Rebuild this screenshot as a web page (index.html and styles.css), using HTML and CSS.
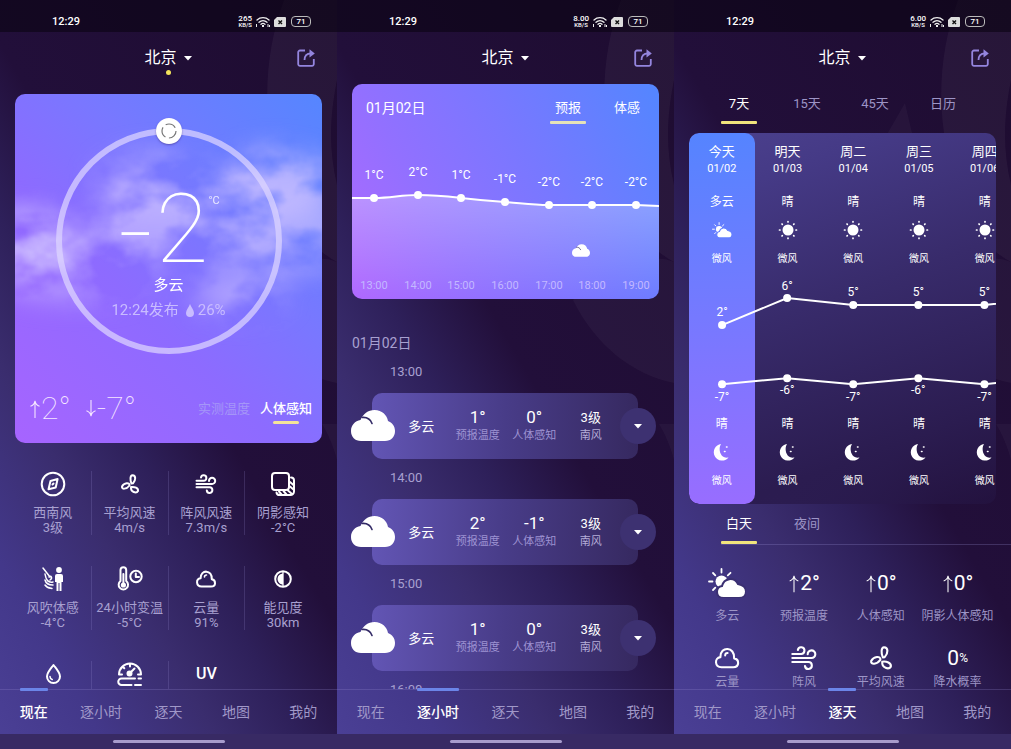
FILE: index.html
```html
<!DOCTYPE html>
<html lang="zh-CN">
<head>
<meta charset="utf-8">
<meta name="viewport" content="width=device-width, initial-scale=1">
<title>天气</title>
<link rel="stylesheet" href="styles.css">
</head>
<body>
<svg class="defs" aria-hidden="true">
  <defs>
    <symbol id="deco" viewBox="0 0 337 749">
      <path fill="#fff" opacity=".045" fill-rule="evenodd" d="M284 0C262 60 260 130 288 200C304 240 322 254 337 262V0ZM337 80C329 120 329 150 337 185Z"/>
      <path fill="#fff" opacity=".035" d="M236 300C258 345 296 375 337 383V262C310 250 270 270 236 300Z"/>
      <path fill="#fff" opacity=".03" d="M322 424H337V460C333 445 328 434 322 424ZM204 150L231 103L242 150Z"/>
    </symbol>
    <symbol id="i-wifi" viewBox="0 0 14 11"><g fill="none" stroke="#eee" stroke-width="1.3" stroke-linecap="round"><path d="M1 4A9 9 0 0 1 13 4M3 6.300A6 6 0 0 1 11 6.300M5 8.300A3 3 0 0 1 9 8.300"/></g><path fill="#eee" d="M6 9h2v2H6zM0 8h1v3H0zM11.500 8h1v3h-1zM13 9h1v2h-1z"/></symbol>
    <symbol id="i-sim" viewBox="0 0 12 10"><path fill="#ddd" d="M3 0h8a1 1 0 0 1 1 1v8a1 1 0 0 1-1 1H1a1 1 0 0 1-1-1V3z"/><path d="M4.500 3.500l3.500 3.500M8 3.500L4.500 7" stroke="#111" stroke-width="1.400"/></symbol>
    <symbol id="i-share" viewBox="0 0 18 18"><g fill="none" stroke="#9485de" stroke-width="1.800"><path d="M8 1.500H3A1.800 1.800 0 0 0 1.200 3.300V15A1.800 1.800 0 0 0 3 16.800H15A1.800 1.800 0 0 0 16.800 15V10"/><path d="M7.500 11C7.500 7 9.500 4.500 14 4.300"/></g><path fill="#9485de" d="M12.500 .300L17.800 4.400L12.500 8.500z"/></symbol>
    <symbol id="i-compass" viewBox="0 0 26 26"><circle cx="13" cy="13" r="11.300"/><path d="M17.600 8L15.700 16.500L8.500 18.300L10.500 10z"/><path d="M12.500 13.500l1-1"/></symbol>
    <symbol id="i-fan" viewBox="0 0 26 26"><path d="M14.500 12.500C13 9 13 4.500 15.500 4.300C19 4.500 19 9 16 12.300Z"/><path d="M12.500 14.500C13 11 7 11.500 5 15.500C4.500 18.500 9.500 18.500 12.500 14.500Z"/><path d="M14 16C17.500 15.500 21.500 17 21 20C19.500 22.500 13.500 21.500 14 16Z"/></symbol>
    <symbol id="i-wind" viewBox="0 0 26 26"><path d="M3.500 9.700H10.500A2.700 2.700 0 1 0 8 6.500M3.500 13H19A3.100 3.100 0 1 0 16 10M3.500 16.300H16.500A2.800 2.800 0 1 1 13.800 19.500"/></symbol>
    <symbol id="i-shadow" viewBox="0 0 26 26"><rect x="2" y="2" width="17" height="17" rx="3"/><path d="M21 6.500A3 3 0 0 1 24 9.500V20.500A3.500 3.500 0 0 1 20.500 24H9.500A3 3 0 0 1 6.500 21.500M9 20.500l2.500 3M13.500 20l3 3.500M18 19.500l4 3.500M20 15.500l3.500 3M20 11l3.500 3"/></symbol>
    <symbol id="i-person" viewBox="0 0 26 26"><g fill="currentColor" stroke="none"><circle cx="19" cy="4" r="2.900"/><path d="M17 8h4a2 2 0 0 1 2 2v6h-1.500v9h-2v-8h-1v8h-2v-9H15v-6a2 2 0 0 1 2-2z"/></g><path stroke-width="1.500" d="M3 2L10 11M5 8C6 14 8 17 13 16M9 11C11 9 13 12 10 14M5 14C6 18 9 19 13 19M5 19C7 22 9 22 12 22.500"/></symbol>
    <symbol id="i-thermo" viewBox="0 0 26 26"><path d="M3.500 15V4A2.800 2.800 0 0 1 9.200 4V15A4.700 4.700 0 1 1 3.500 15Z"/><path d="M6.400 8V18"/><circle cx="6.400" cy="19" r="1.600" fill="currentColor"/><circle cx="19" cy="10.500" r="5.700"/><path d="M18.800 7.500V11H22"/></symbol>
    <symbol id="i-cloud" viewBox="0 0 26 26"><path d="M8.500 20.500H18C23.500 20.500 23 14 18.800 13.300C19.500 3.500 7.500 3 7.600 12.300C2.500 13 3 20.500 8.500 20.500Z"/><path stroke-width="1.600" d="M11.500 11A2 2 0 0 1 13.500 9"/></symbol>
    <symbol id="i-half" viewBox="0 0 26 26"><circle cx="13" cy="13" r="7.800"/><path fill="currentColor" d="M13 7.500V18.500A5.500 5.500 0 0 1 13 7.500Z" stroke="none"/><path d="M13 6V20" stroke-width="1.300"/></symbol>
    <symbol id="i-drop" viewBox="0 0 26 26"><path d="M13.500 4C10.500 8 7 11.500 7 15.500A6.500 6.500 0 0 0 20 15.500C20 11.500 16.500 8 13.500 4Z"/><path stroke-width="1.600" d="M10 15.500A3.200 3.200 0 0 0 12.200 18.500"/></symbol>
    <symbol id="i-gauge" viewBox="0 0 26 26"><path d="M2 13.500A11 11 0 0 1 24 13.500M2 13.500h3M21 13.500H24M13 2.500v3M5.500 5.500l1.800 1.800M12.500 12.500L17.500 7.500"/><circle cx="12.500" cy="12.500" r="2" fill="currentColor"/><path d="M18 17.500H4.500A3 3 0 0 0 4.500 24H14.500M21.500 17.500H24M18 24H24"/></symbol>
    <symbol id="i-bigcloud" viewBox="0 0 44 31"><path fill="#fff" d="M10 31C4 31 0 27 0 21C0 15 4 11 9.500 10C12 4 17 0 23.500 0C31 0 36 5 37 11C41 12.500 44 16 44 21C44 27 40 31 34 31Z"/><path fill="none" stroke="#332a66" stroke-width="1.600" stroke-linecap="round" d="M11 7.500C16 7 19.500 9.500 21 13.500"/></symbol>
    <symbol id="i-partly" viewBox="0 0 38 30"><circle cx="13.500" cy="13.500" r="6" fill="#fff"/><path stroke="#fff" stroke-width="1.800" stroke-linecap="round" d="M13.500 1V4.500M5 5L7.300 7.300M1 13.500H4.500M5 22L7.300 19.700M19.800 7.300L22.500 4.800"/><path class="cut" fill="#fff" stroke-width="2" d="M15.500 30C11.500 30 9 27.500 9 24C9 20.500 11 18.500 14 18C16 10 26 8.500 30 16C35 17 38 19.500 38 23.500C38 27.500 35 30 31 30Z"/></symbol>
    <symbol id="i-sun" viewBox="0 0 20 20"><circle cx="10" cy="10" r="5.500" fill="#fff"/><path stroke="#fff" stroke-width="1.700" stroke-linecap="round" d="M10 1.500V2M10 18V18.500M1.500 10H2M18 10H18.500M4 4L4.300 4.300M16 16L15.700 15.700M4 16L4.300 15.700M16 4L15.700 4.300"/></symbol>
    <symbol id="i-moon" viewBox="0 0 20 20"><path fill="#fff" d="M9 2A8.300 8.300 0 1 0 16.500 15.500C9 17 5.500 8 9 2Z"/><path stroke="#fff" stroke-width="1.600" stroke-linecap="round" d="M14.500 5H15M12.500 9.500H13"/></symbol>
    <symbol id="i-up" viewBox="0 0 12 22"><path fill="none" stroke="currentColor" stroke-width="1.200" d="M6 21V2M1 8C4 7 5.500 5 6 2C6.500 5 8 7 11 8"/></symbol>
    <symbol id="i-down" viewBox="0 0 12 22"><path fill="none" stroke="currentColor" stroke-width="1.200" d="M6 1V19M1 13C4 14 5.500 16 6 19C6.500 16 8 14 11 13"/></symbol>
  </defs>
</svg>

<div class="screens">

  <section class="phone">
    <svg class="deco" preserveAspectRatio="xMaxYMin meet"><use href="#deco"/></svg>
    <div class="status"><time>12:29</time><span class="rate"><b>265</b><b>KB/S</b></span><svg class="wifi"><use href="#i-wifi"/></svg><svg class="sim"><use href="#i-sim"/></svg><span class="battery">71</span></div>
    <header class="head"><button class="city located">北京<i class="caret"></i></button><button class="share" aria-label="分享"><svg><use href="#i-share"/></svg></button></header>
    <main class="main">
      <section class="now">
        <svg class="sky" viewBox="0 0 307 349" preserveAspectRatio="none" aria-hidden="true">
          <defs>
            <filter id="puff" filterUnits="userSpaceOnUse" x="-60" y="0" width="430" height="349" color-interpolation-filters="sRGB">
              <feGaussianBlur in="SourceGraphic" stdDeviation="14" result="b"/>
              <feTurbulence type="fractalNoise" baseFrequency=".013 .02" numOctaves="5" seed="8"/>
              <feColorMatrix values="0 0 0 0 1  0 0 0 0 1  0 0 0 0 1  3 0 0 0 -.9" result="n"/>
              <feComposite in="b" in2="n" operator="in"/>
              <feGaussianBlur stdDeviation=".8"/>
            </filter>
          </defs>
          <g filter="url(#puff)" fill="#d2c4ff">
            <ellipse cx="10" cy="150" rx="60" ry="34" opacity=".8"/>
            <ellipse cx="60" cy="180" rx="80" ry="26" opacity=".5"/>
            <ellipse cx="140" cy="90" rx="60" ry="30" opacity=".6"/>
            <ellipse cx="160" cy="135" rx="90" ry="36" opacity=".6"/>
            <ellipse cx="260" cy="90" rx="60" ry="34" opacity=".75"/>
            <ellipse cx="275" cy="140" rx="75" ry="36" opacity=".6"/>
            <ellipse cx="225" cy="200" rx="46" ry="20" opacity=".6"/>
          </g>
        </svg>
        <div class="dial">
          <span class="knob"><svg viewBox="0 0 18 18"><circle cx="9" cy="9" r="7" fill="none" stroke="#777" stroke-width="1.200" stroke-dasharray="11 3.660"/></svg></span>
          <div class="temp"><span class="minus">–</span><span>2</span><sup>°C</sup></div>
          <strong class="cond">多云</strong>
          <p class="pub"><span>12:24发布</span><svg viewBox="0 0 8 13"><path fill="currentColor" d="M4 0C3 3 0 6 0 9A4 4 0 0 0 8 9C8 6 5 3 4 0Z"/></svg><span>26%</span></p>
        </div>
        <div class="foot">
          <span class="range"><svg><use href="#i-up"/></svg>2°</span>
          <span class="range"><svg><use href="#i-down"/></svg>-7°</span>
          <button class="mode">实测温度</button><button class="mode on">人体感知</button>
        </div>
      </section>
      <ul class="metrics">
        <li><svg class="ic"><use href="#i-compass"/></svg><span>西南风</span><span>3级</span></li>
        <li><svg class="ic"><use href="#i-fan"/></svg><span>平均风速</span><span>4m/s</span></li>
        <li><svg class="ic"><use href="#i-wind"/></svg><span>阵风风速</span><span>7.3m/s</span></li>
        <li><svg class="ic"><use href="#i-shadow"/></svg><span>阴影感知</span><span>-2°C</span></li>
        <li><svg class="ic"><use href="#i-person"/></svg><span>风吹体感</span><span>-4°C</span></li>
        <li><svg class="ic"><use href="#i-thermo"/></svg><span>24小时变温</span><span>-5°C</span></li>
        <li><svg class="ic"><use href="#i-cloud"/></svg><span>云量</span><span>91%</span></li>
        <li><svg class="ic"><use href="#i-half"/></svg><span>能见度</span><span>30km</span></li>
        <li><svg class="ic"><use href="#i-drop"/></svg></li>
        <li><svg class="ic"><use href="#i-gauge"/></svg></li>
        <li class="last"><b class="uv">UV</b></li>
      </ul>
    </main>
    <nav class="nav"><a class="on" href="#now">现在</a><a href="#hourly">逐小时</a><a href="#daily">逐天</a><a href="#map">地图</a><a href="#me">我的</a></nav>
    <div class="home"></div>
  </section>

  <section class="phone">
    <svg class="deco" preserveAspectRatio="xMaxYMin meet"><use href="#deco"/></svg>
    <div class="status"><time>12:29</time><span class="rate"><b>8.00</b><b>KB/S</b></span><svg class="wifi"><use href="#i-wifi"/></svg><svg class="sim"><use href="#i-sim"/></svg><span class="battery">71</span></div>
    <header class="head"><button class="city">北京<i class="caret"></i></button><button class="share" aria-label="分享"><svg><use href="#i-share"/></svg></button></header>
    <main class="main">
      <section class="hours">
        <div class="hours-head"><span class="date">01月02日</span><button class="tab on">预报</button><button class="tab">体感</button></div>
        <svg class="curve" viewBox="0 40 307 175" role="img" aria-label="逐小时温度">
          <defs><linearGradient id="area" x2="0" y2="1"><stop stop-color="#fff" stop-opacity=".27"/><stop offset="1" stop-color="#fff" stop-opacity="0"/></linearGradient></defs>
          <path fill="url(#area)" d="M0 114H22C40 114 48 111 66 111S92 112 109 114S138 117 153 118S180 121 197 121H284L307 122V215H0Z"/>
          <path fill="none" stroke="#fff" stroke-width="2" d="M0 114H22C40 114 48 111 66 111S92 112 109 114S138 117 153 118S180 121 197 121H284L307 122"/>
          <g fill="#fff"><circle cx="22" cy="114" r="4"/><circle cx="66" cy="111" r="4"/><circle cx="109" cy="114" r="4"/><circle cx="153" cy="118" r="4"/><circle cx="197" cy="121" r="4"/><circle cx="240" cy="121" r="4"/><circle cx="284" cy="121" r="4"/></g>
          <g class="deg"><text x="22" y="95">1°C</text><text x="66" y="92">2°C</text><text x="109" y="95">1°C</text><text x="153" y="99">-1°C</text><text x="197" y="102">-2°C</text><text x="240" y="102">-2°C</text><text x="284" y="102">-2°C</text></g>
          <g class="hr"><text x="22" y="205">13:00</text><text x="66" y="205">14:00</text><text x="109" y="205">15:00</text><text x="153" y="205">16:00</text><text x="197" y="205">17:00</text><text x="240" y="205">18:00</text><text x="284" y="205">19:00</text></g>
          <use href="#i-bigcloud" x="220" y="160" width="18" height="13"/>
        </svg>
      </section>
      <h2 class="day">01月02日</h2>
      <ol class="list">
        <li><time>13:00</time><div class="row"><svg class="big"><use href="#i-bigcloud"/></svg><span class="what">多云</span><span class="val"><b>1°</b><small>预报温度</small></span><span class="val"><b>0°</b><small>人体感知</small></span><span class="val wind"><b>3级</b><small>南风</small></span><button class="more" aria-label="展开"><i class="caret"></i></button></div></li>
        <li><time>14:00</time><div class="row"><svg class="big"><use href="#i-bigcloud"/></svg><span class="what">多云</span><span class="val"><b>2°</b><small>预报温度</small></span><span class="val"><b>-1°</b><small>人体感知</small></span><span class="val wind"><b>3级</b><small>南风</small></span><button class="more" aria-label="展开"><i class="caret"></i></button></div></li>
        <li><time>15:00</time><div class="row"><svg class="big"><use href="#i-bigcloud"/></svg><span class="what">多云</span><span class="val"><b>1°</b><small>预报温度</small></span><span class="val"><b>0°</b><small>人体感知</small></span><span class="val wind"><b>3级</b><small>南风</small></span><button class="more" aria-label="展开"><i class="caret"></i></button></div></li>
        <li><time>16:00</time></li>
      </ol>
    </main>
    <nav class="nav"><a href="#now">现在</a><a class="on" href="#hourly">逐小时</a><a href="#daily">逐天</a><a href="#map">地图</a><a href="#me">我的</a></nav>
    <div class="home"></div>
  </section>

  <section class="phone">
    <svg class="deco" preserveAspectRatio="xMaxYMin meet"><use href="#deco"/></svg>
    <div class="status"><time>12:29</time><span class="rate"><b>6.00</b><b>KB/S</b></span><svg class="wifi"><use href="#i-wifi"/></svg><svg class="sim"><use href="#i-sim"/></svg><span class="battery">71</span></div>
    <header class="head"><button class="city">北京<i class="caret"></i></button><button class="share" aria-label="分享"><svg><use href="#i-share"/></svg></button></header>
    <main class="main">
      <div class="tabs"><button class="tab on">7天</button><button class="tab">15天</button><button class="tab">45天</button><button class="tab">日历</button></div>
      <section class="week">
        <div class="week-in">
          <div class="today"></div>
          <div class="cell c1"><b>今天</b><time>01/02</time><span>多云</span><svg class="wx part"><use href="#i-partly"/></svg><small>微风</small></div>
          <div class="cell c2"><b>明天</b><time>01/03</time><span>晴</span><svg class="wx"><use href="#i-sun"/></svg><small>微风</small></div>
          <div class="cell c3"><b>周二</b><time>01/04</time><span>晴</span><svg class="wx"><use href="#i-sun"/></svg><small>微风</small></div>
          <div class="cell c4"><b>周三</b><time>01/05</time><span>晴</span><svg class="wx"><use href="#i-sun"/></svg><small>微风</small></div>
          <div class="cell c5"><b>周四</b><time>01/06</time><span>晴</span><svg class="wx"><use href="#i-sun"/></svg><small>微风</small></div>
          <svg class="lines" viewBox="0 0 328 136" role="img" aria-label="七天温度">
            <path fill="none" stroke="#fff" stroke-width="2" d="M33 53L98 26L164 33H295L328 29M33 112L98 106L164 112L229 106L295 112L328 109"/>
            <g fill="#fff"><circle cx="33" cy="53" r="4"/><circle cx="98" cy="26" r="4"/><circle cx="164" cy="33" r="4"/><circle cx="229" cy="33" r="4"/><circle cx="295" cy="33" r="4"/><circle cx="33" cy="112" r="4"/><circle cx="98" cy="106" r="4"/><circle cx="164" cy="112" r="4"/><circle cx="229" cy="106" r="4"/><circle cx="295" cy="112" r="4"/></g>
            <g class="deg"><text x="33" y="44">2°</text><text x="98" y="18">6°</text><text x="164" y="24">5°</text><text x="229" y="24">5°</text><text x="295" y="24">5°</text><text x="33" y="129">-7°</text><text x="98" y="122">-6°</text><text x="164" y="129">-7°</text><text x="229" y="122">-6°</text><text x="295" y="129">-7°</text></g>
          </svg>
          <div class="cell night c1"><span>晴</span><svg class="wx"><use href="#i-moon"/></svg><small>微风</small></div>
          <div class="cell night c2"><span>晴</span><svg class="wx"><use href="#i-moon"/></svg><small>微风</small></div>
          <div class="cell night c3"><span>晴</span><svg class="wx"><use href="#i-moon"/></svg><small>微风</small></div>
          <div class="cell night c4"><span>晴</span><svg class="wx"><use href="#i-moon"/></svg><small>微风</small></div>
          <div class="cell night c5"><span>晴</span><svg class="wx"><use href="#i-moon"/></svg><small>微风</small></div>
        </div>
      </section>
      <div class="tabs parts"><button class="tab on">白天</button><button class="tab">夜间</button></div>
      <ul class="facts">
        <li><svg class="sky-ic"><use href="#i-partly"/></svg><span>多云</span></li>
        <li><div class="num"><svg><use href="#i-up"/></svg>2°</div><span>预报温度</span></li>
        <li><div class="num"><svg><use href="#i-up"/></svg>0°</div><span>人体感知</span></li>
        <li><div class="num"><svg><use href="#i-up"/></svg>0°</div><span>阴影人体感知</span></li>
      </ul>
      <ul class="facts second">
        <li><svg class="ic"><use href="#i-cloud"/></svg><span>云量</span></li>
        <li><svg class="ic"><use href="#i-wind"/></svg><span>阵风</span></li>
        <li><svg class="ic"><use href="#i-fan"/></svg><span>平均风速</span></li>
        <li><div class="num">0<small>%</small></div><span>降水概率</span></li>
      </ul>
    </main>
    <nav class="nav"><a href="#now">现在</a><a href="#hourly">逐小时</a><a class="on" href="#daily">逐天</a><a href="#map">地图</a><a href="#me">我的</a></nav>
    <div class="home"></div>
  </section>

</div>
</body>
</html>
```
FILE: styles.css
```css
* { box-sizing: border-box; }
body {
  margin: 0;
  background: #1e0c30;
  color: #fff;
  font-family: Roboto, "Noto Sans CJK SC", sans-serif;
  font-size: 13px;
}
ul, ol { list-style: none; margin: 0; padding: 0; }
h2, p { margin: 0; font-weight: 400; }
button { border: 0; padding: 0; background: none; color: inherit; font: inherit; white-space: nowrap; }
a { color: inherit; text-decoration: none; }
i { font-style: normal; }
b, strong { font-weight: 400; }
.defs { position: absolute; width: 0; height: 0; }

.screens { display: grid; grid-template-columns: repeat(3, minmax(0, 1fr)); height: 100vh; }
.phone {
  --cut: #3b3072;
  position: relative;
  display: flex;
  flex-direction: column;
  min-height: 0;
  overflow: hidden;
  isolation: isolate;
  background: linear-gradient(60deg, #4b4096 0%, #43388a 14%, #3a2d6e 29%, #2e205a 40%, #220f3a 53%, #1e0c30 100%);
}
.deco { position: absolute; inset: 0; width: 100%; height: 100%; z-index: -1; }

/* Status bar */
.status {
  display: flex;
  align-items: center;
  flex: none;
  height: 32px;
  padding: 11px 26px 0 52px;
  background: rgba(10, 4, 18, .6);
  font-size: 11px;
  font-weight: 500;
}
.status time { margin-right: auto; }
.rate { display: flex; flex-direction: column; align-items: center; margin-right: 4px; font-size: 8px; line-height: 6px; }
.rate b { font-weight: 500; }
.rate b + b { font-size: 6px; line-height: 5px; }
.wifi { width: 14px; height: 11px; margin-right: 4px; }
.sim { width: 12px; height: 10px; margin-right: 5px; }
.battery { width: 20px; height: 11px; border: 1px solid #bbb; border-radius: 4px; font-size: 8px; line-height: 9px; text-align: center; }

/* Title bar */
.head { display: grid; grid-template-columns: 1fr auto 1fr; align-items: center; flex: none; height: 52px; padding: 0 22px; }
.city { position: relative; grid-column: 2; display: flex; align-items: center; gap: 7px; font-size: 16px; line-height: 24px; }
.located::after { content: ""; position: absolute; left: 50%; top: 24px; width: 5px; height: 5px; margin-left: -2px; border-radius: 50%; background: #f3e45c; }
.caret { width: 9px; height: 5px; background: #fff; clip-path: polygon(0 0, 100% 0, 50% 100%); }
.share { justify-self: end; width: 18px; height: 18px; }
.share svg { display: block; width: 18px; height: 18px; }

.main { flex: 1; min-height: 0; overflow: hidden; }

/* Current conditions */
.now {
  position: relative;
  display: flex;
  flex-direction: column;
  align-items: center;
  margin: 10px 15px 0;
  padding: 34px 10px 17px;
  border-radius: 10px;
  overflow: hidden;
  isolation: isolate;
  background: linear-gradient(45deg, #a764ff 0%, #8d6bff 40%, #7878ff 64%, #5586ff 100%);
}
.sky { position: absolute; inset: 0; width: 100%; height: 100%; z-index: -1; }
.dial {
  position: relative;
  display: flex;
  flex-direction: column;
  align-items: center;
  width: 226px;
  height: 226px;
  padding-top: 59px;
  border: 6px solid rgba(222, 214, 255, .72);
  border-radius: 50%;
}
.knob { position: absolute; top: -16px; left: 94px; display: grid; place-items: center; width: 26px; height: 26px; border-radius: 50%; background: #fff; box-shadow: 0 1px 2px rgba(60, 40, 120, .5); }
.knob svg { width: 18px; height: 18px; }
.temp { display: flex; justify-content: center; align-items: flex-start; height: 72px; font-size: 96px; font-weight: 100; line-height: 72px; }
.temp .minus { margin-right: 2px; font-size: 56px; font-weight: 300; line-height: 84px; }
.temp sup { font-size: 11px; font-weight: 400; line-height: 16px; opacity: .8; }
.cond { margin-top: 10px; font-size: 15px; line-height: 20px; }
.pub { display: flex; align-items: center; gap: 4px; margin-top: 5px; font-size: 15px; line-height: 20px; color: #c9bcff; }
.pub svg { width: 8px; height: 13px; margin-left: 3px; }
.foot { display: flex; align-items: center; align-self: stretch; margin: 37px 0 0 4px; height: 35px; }
.range { display: flex; align-items: center; margin-right: 14px; font-size: 32px; font-weight: 100; line-height: 35px; color: #f6e6ff; }
.range svg { width: 12px; height: 20px; }
.mode { margin-left: auto; line-height: 20px; color: #a596f8; }
.mode + .mode { margin-left: 10px; }
.mode.on { color: #fff; font-weight: 500; position: relative; }
.mode.on::after { content: ""; position: absolute; left: 25%; right: 25%; bottom: -5px; height: 3px; border-radius: 2px; background: #f3e39a; }

/* Metric grid */
.metrics { display: grid; grid-template-columns: repeat(4, 1fr); row-gap: 31px; margin: 28px 15px 0; color: #a8a0d0; }
.metrics li { display: flex; flex-direction: column; align-items: center; min-height: 63px; border-right: 1px solid rgba(160, 150, 220, .2); white-space: nowrap; line-height: 15px; }
.metrics li:nth-child(4n), .metrics .last { border-right-color: transparent; }
.ic { width: 26px; height: 26px; fill: none; stroke: #fff; stroke-width: 2px; stroke-linecap: round; stroke-linejoin: round; color: #fff; }
.metrics .ic { margin-bottom: 8px; }
.uv { color: #fff; font-size: 16px; font-weight: 500; line-height: 26px; }

/* Hourly */
.hours { margin: 0 15px; border-radius: 10px; overflow: hidden; background: linear-gradient(60deg, #b068ff 0%, #9270ff 30%, #7878ff 60%, #5386ff 100%); }
.hours-head { display: flex; align-items: flex-start; gap: 23px; height: 40px; padding: 14px 14px 0; line-height: 20px; }
.hours-head .date { margin-right: auto; font-size: 14px; }
.hours-head .tab, .hours-head .tab.on { color: #fff; height: 25px; }
.curve, .lines { display: block; width: 100%; height: auto; }
.curve text, .lines text { fill: #fff; font-size: 12px; text-anchor: middle; }
.curve .hr text { fill: #c3b8ff; font-size: 11px; }
.day { margin: 34px 15px 9px; font-size: 14px; line-height: 20px; color: #a8a0d0; }
.list { margin: 0 36px 0 35px; }
.list li { margin-bottom: 9px; }
.list time { display: block; margin: 0 0 11px 18px; line-height: 20px; color: #a8a0d0; }
.row {
  position: relative;
  display: grid;
  grid-template-columns: repeat(4, 1fr);
  align-items: center;
  height: 66px;
  padding: 0 19px 0 21px;
  border-radius: 10px;
  background: linear-gradient(90deg, #6255b4 0%, #483c88 50%, #362960 100%);
  text-align: center;
  white-space: nowrap;
}
.what { padding-bottom: 2px; }
.big { position: absolute; left: -21px; top: 17px; width: 44px; height: 31px; }
.more { position: absolute; right: -18px; top: 15px; display: grid; place-items: center; width: 36px; height: 36px; border-radius: 50%; background: #3d3171; }
.val { display: flex; flex-direction: column; align-items: center; }
.val b { font-size: 17px; line-height: 19px; }
.val small { font-size: 11px; line-height: 18px; color: #9d92d2; }
.val.wind b { font-size: 13px; }
.val.wind small { color: #b5add8; }

/* Tabs */
.tabs { display: flex; gap: 32px; padding: 10px 0 9px 47px; color: #9d95c6; }
.tab { position: relative; width: 36px; height: 30px; line-height: 20px; display: flex; justify-content: center; }
.tab.on { color: #fff; }
.tab.on::after { content: ""; position: absolute; left: 0; right: 0; bottom: 0; height: 3px; border-radius: 1px; background: #f1e47c; }
.hours .tab.on::after { background: #e5e2b8; }
.hours-head .tab.on::after { bottom: -1px; }
.tabs .tab { height: 30px; }
.parts { padding: 10px 0 0; margin-left: 47px; border-bottom: 1px solid rgba(160, 150, 220, .25); }

/* Week forecast */
.week { margin: 0 15px; border-radius: 10px; overflow: hidden; background: linear-gradient(160deg, #4c418e 0%, #453a86 15%, #382b6b 45%, #2b1c50 80%, rgba(36, 20, 66, .6) 100%); }
.week-in { display: grid; grid-template-columns: repeat(5, 1fr); width: 107%; }
.today { grid-area: 1 / 1 / 4 / 2; border-radius: 10px; background: linear-gradient(#5584ff, #7679ff 50%, #986dff); }
.cell { grid-row: 1; display: flex; flex-direction: column; align-items: center; padding: 10px 0 5px; white-space: nowrap; }
.c1 { grid-column: 1; }
.c2 { grid-column: 2; }
.c3 { grid-column: 3; }
.c4 { grid-column: 4; }
.c5 { grid-column: 5; }
.cell b { line-height: 18px; }
.cell time { margin-bottom: 16px; font-size: 11px; line-height: 16px; }
.cell span { margin-bottom: 8px; font-size: 12px; line-height: 18px; }
.cell small { font-size: 10px; line-height: 16px; }
.wx { width: 20px; height: 22px; margin-bottom: 10px; }
.lines { grid-area: 2 / 1 / 3 / 6; }
.night { grid-row: 3; padding: 7px 0 15px; }
.cut { stroke: var(--cut); }
.part { --cut: #6480ff; }

/* Day facts */
.facts { display: grid; grid-template-columns: repeat(4, 1fr); margin: 20px 15px 0; color: #9d95c6; font-size: 12px; line-height: 20px; text-align: center; white-space: nowrap; }
.facts li { display: grid; grid-template-rows: 36px 20px; row-gap: 5px; place-items: center; }
.facts.second li { grid-template-rows: 24px 20px; row-gap: 2px; }
.second .ic { width: 32px; height: 32px; stroke-width: 1.700px; }
.sky-ic { width: 38px; height: 30px; }
.num { display: flex; align-items: center; color: #fff; font-size: 21px; }
.num svg { width: 12px; height: 19px; }
.num small { font-size: 12px; align-self: flex-end; }

/* Bottom navigation */
.nav { display: grid; grid-template-columns: repeat(5, 1fr); flex: none; height: 45px; border-top: 1px solid rgba(150, 140, 210, .25); font-size: 14px; line-height: 44px; text-align: center; color: #a098c8; }
.nav a { justify-self: center; position: relative; }
.nav .on { color: #fff; font-weight: 500; }
.nav .on::before { content: ""; position: absolute; left: 0; right: 0; top: -2px; height: 3px; border-radius: 1px; background: #6b85e8; }
.home { display: grid; place-items: center; flex: none; height: 15px; background: #382a64; }
.home::after { content: ""; width: 112px; height: 3px; border-radius: 2px; background: #a79bcc; }
```
